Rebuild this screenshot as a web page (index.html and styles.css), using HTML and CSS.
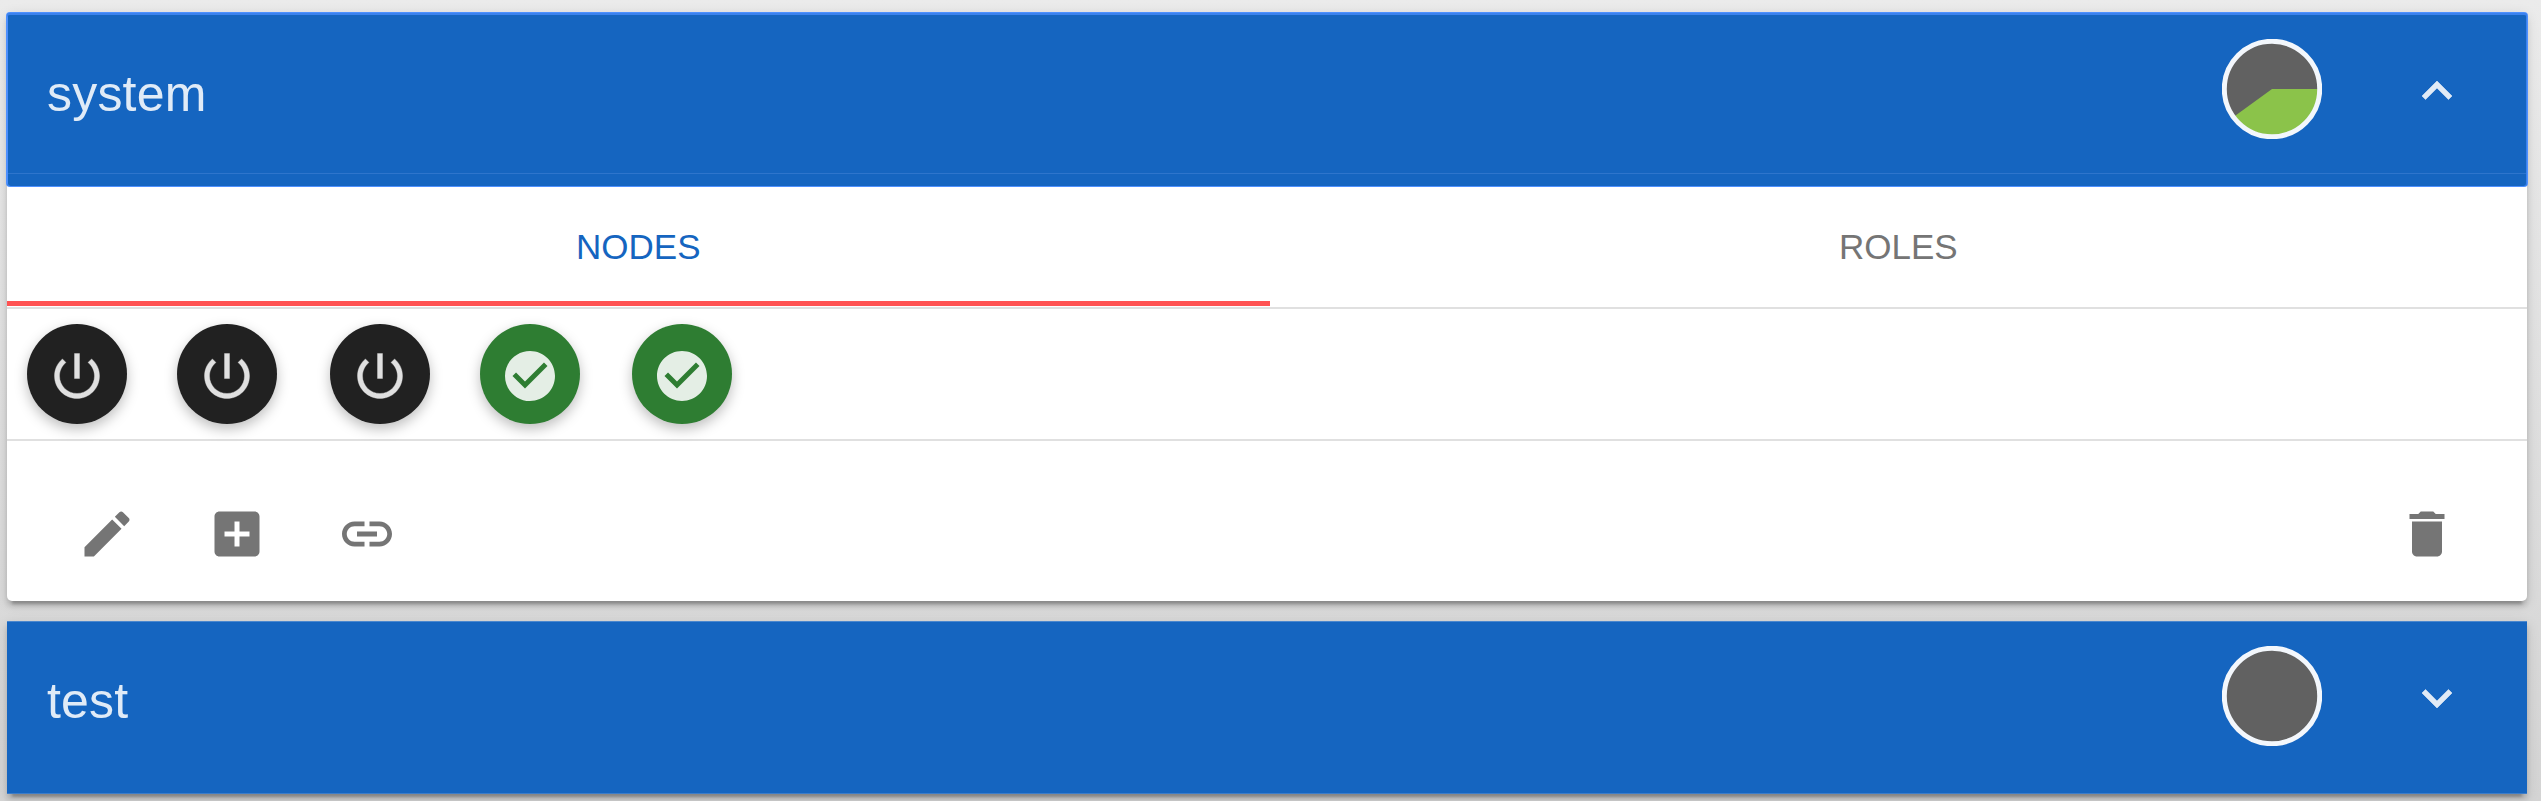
FILE: index.html
```html
<!DOCTYPE html>
<html lang="en">
<head>
<meta charset="utf-8">
<title>Deployments</title>
<link rel="stylesheet" href="styles.css">
</head>
<body>
<main class="page">
  <section class="card card-open">
    <header class="card-header focused">
      <h2 class="title">system</h2>
      <svg class="pie" viewBox="0 0 100 100"><circle cx="50" cy="50" r="47.5" fill="#616161"/><path d="M50 50H96A46 46 0 0 1 12.8 77.04Z" fill="#8bc34a"/><circle class="ring" cx="50" cy="50" r="47.7"/></svg>
      <svg class="icon chevron" viewBox="0 0 24 24"><path d="M12 8l-6 6 1.41 1.41L12 10.83l4.59 4.58L18 14z"/></svg>
    </header>
    <nav class="tabs">
      <a class="tab active">NODES</a>
      <a class="tab">ROLES</a>
    </nav>
    <div class="nodes">
      <span class="node off"><svg class="icon" viewBox="0 0 24 24"><path d="M13 3h-2v10h2V3zm4.83 2.17l-1.42 1.42C17.99 7.86 19 9.81 19 12c0 3.87-3.13 7-7 7s-7-3.13-7-7c0-2.19 1.01-4.14 2.58-5.42L6.17 5.17C4.23 6.82 3 9.26 3 12c0 4.97 4.03 9 9 9s9-4.03 9-9c0-2.74-1.23-5.18-3.17-6.83z"/></svg></span>
      <span class="node off"><svg class="icon" viewBox="0 0 24 24"><path d="M13 3h-2v10h2V3zm4.83 2.17l-1.42 1.42C17.99 7.86 19 9.81 19 12c0 3.87-3.13 7-7 7s-7-3.13-7-7c0-2.19 1.01-4.14 2.58-5.42L6.17 5.17C4.23 6.82 3 9.26 3 12c0 4.97 4.03 9 9 9s9-4.03 9-9c0-2.74-1.23-5.18-3.17-6.83z"/></svg></span>
      <span class="node off"><svg class="icon" viewBox="0 0 24 24"><path d="M13 3h-2v10h2V3zm4.83 2.17l-1.42 1.42C17.99 7.86 19 9.81 19 12c0 3.87-3.13 7-7 7s-7-3.13-7-7c0-2.19 1.01-4.14 2.58-5.42L6.17 5.17C4.23 6.82 3 9.26 3 12c0 4.97 4.03 9 9 9s9-4.03 9-9c0-2.74-1.23-5.18-3.17-6.83z"/></svg></span>
      <span class="node ready"><svg class="icon" viewBox="0 0 24 24"><path d="M12 2C6.48 2 2 6.48 2 12s4.48 10 10 10 10-4.48 10-10S17.52 2 12 2zm-2 15l-5-5 1.41-1.41L10 14.17l7.59-7.59L19 8l-9 9z"/></svg></span>
      <span class="node ready"><svg class="icon" viewBox="0 0 24 24"><path d="M12 2C6.48 2 2 6.48 2 12s4.48 10 10 10 10-4.48 10-10S17.52 2 12 2zm-2 15l-5-5 1.41-1.41L10 14.17l7.59-7.59L19 8l-9 9z"/></svg></span>
    </div>
    <footer class="actions">
      <svg class="icon" viewBox="0 0 24 24"><path d="M3 17.25V21h3.75L17.81 9.94l-3.75-3.75L3 17.25zM20.71 7.04c.39-.39.39-1.02 0-1.41l-2.34-2.34c-.39-.39-1.02-.39-1.41 0l-1.83 1.83 3.75 3.75 1.83-1.83z"/></svg>
      <svg class="icon" viewBox="0 0 24 24"><path d="M19 3H5c-1.11 0-2 .9-2 2v14c0 1.1.89 2 2 2h14c1.1 0 2-.9 2-2V5c0-1.1-.9-2-2-2zm-2 10h-4v4h-2v-4H7v-2h4V7h2v4h4v2z"/></svg>
      <svg class="icon" viewBox="0 0 24 24"><path d="M3.9 12c0-1.71 1.39-3.1 3.1-3.1h4V7H7c-2.76 0-5 2.24-5 5s2.24 5 5 5h4v-1.9H7c-1.71 0-3.1-1.39-3.1-3.1zM8 13h8v-2H8v2zm9-6h-4v1.9h4c1.71 0 3.1 1.39 3.1 3.1s-1.39 3.1-3.1 3.1h-4V17h4c2.76 0 5-2.24 5-5s-2.24-5-5-5z"/></svg>
      <svg class="icon remove" viewBox="0 0 24 24"><path d="M6 19c0 1.1.9 2 2 2h8c1.1 0 2-.9 2-2V7H6v12zM19 4h-3.500l-1-1h-5l-1 1H5v2h14V4z"/></svg>
    </footer>
  </section>
  <section class="card">
    <header class="card-header">
      <h2 class="title">test</h2>
      <svg class="pie" viewBox="0 0 100 100"><circle cx="50" cy="50" r="47.500" fill="#616161"/><circle class="ring" cx="50" cy="50" r="47.7"/></svg>
      <svg class="icon chevron" viewBox="0 0 24 24"><path d="M16.59 8.59L12 13.17 7.41 8.59 6 10l6 6 6-6z"/></svg>
    </header>
  </section>
</main>
</body>
</html>
```
FILE: styles.css
```css
* { box-sizing: border-box; }
body {
  margin: 0;
  font-family: "Liberation Sans", Arial, sans-serif;
}
.page {
  height: 801px;
  overflow: hidden;
  padding: 13px 14px 0 7px;
  background: linear-gradient(#ebebeb, #d4d4d4);
}
.card {
  background: #fff;
  box-shadow: 0 7.5px 2.5px -5px rgba(0,0,0,.2), 0 5px 5px rgba(0,0,0,.14), 0 2.5px 12.5px rgba(0,0,0,.12);
}
.card-open {
  height: 588px;
  margin-bottom: 20px;
  border-radius: 5px;
}
.card-header {
  display: flex;
  align-items: flex-start;
  height: 173px;
  padding: 25px 60px 0 40px;
  background: #1565c0;
  box-shadow: inset 0 1px #4a87ce, inset 0 -1px #3c7dca;
}
.focused {
  position: relative;
  height: 173px;
  margin-bottom: 1px;
  padding-top: 26px;
  border-radius: 3px;
  background: linear-gradient(#2e75cc, #2e75cc) 0 160px / 100% 1px no-repeat, #1565c0;
  box-shadow: 0 0 0 1px #4d90fe, inset 0 2px #3b82ee, inset 1px 0 #4d90fe, inset -1px 0 #3b82ee;
}
.title {
  flex: 1;
  margin: 25px 0 0;
  font-size: 50px;
  line-height: 60px;
  font-weight: 400;
  letter-spacing: .2px;
  color: rgba(255,255,255,.87);
}
.pie {
  width: 100px;
  height: 100px;
  margin-right: 85px;
}
.ring { fill: none; stroke: #f3f7fc; stroke-width: 5; }
.icon {
  display: block;
  width: 60px;
  height: 60px;
  fill: #757575;
}
.chevron {
  margin-top: 22px;
  fill: #e0eaf6;
  stroke: #e0eaf6;
  stroke-width: .25;
}
.tabs {
  display: grid;
  grid-template-columns: 1262.5px 1fr;
  height: 121.5px;
  border-bottom: 2.5px solid #e0e0e0;
}
.tab {
  display: flex;
  align-items: center;
  justify-content: center;
  height: 119px;
  padding-top: 5px;
  border-bottom: 5px solid transparent;
  font-size: 35px;
  line-height: 40px;
  color: #757575;
}
.tab.active { color: #1565c0; border-color: #ff5252; }
.nodes {
  display: flex;
  gap: 50px;
  height: 132.5px;
  padding: 15px 20px 0;
  border-bottom: 2.5px solid #e0e0e0;
}
.node {
  width: 100px;
  height: 100px;
  padding: 22.5px 20px 0;
  border-radius: 50%;
  box-shadow: 0 5px 12.5px rgba(0,0,0,.26);
}
.node:nth-child(odd):not(:first-child) { margin-left: 2.5px; }
.off { background: #212121; }
.off .icon { fill: #e0e0e0; stroke: #e0e0e0; stroke-width: .15; }
.ready { background: #2e7d32; }
.ready .icon { fill: #e4eee5; }
.actions {
  display: flex;
  gap: 70px;
  padding: 63px 70px 0;
}
.remove { margin-left: auto; }
```
